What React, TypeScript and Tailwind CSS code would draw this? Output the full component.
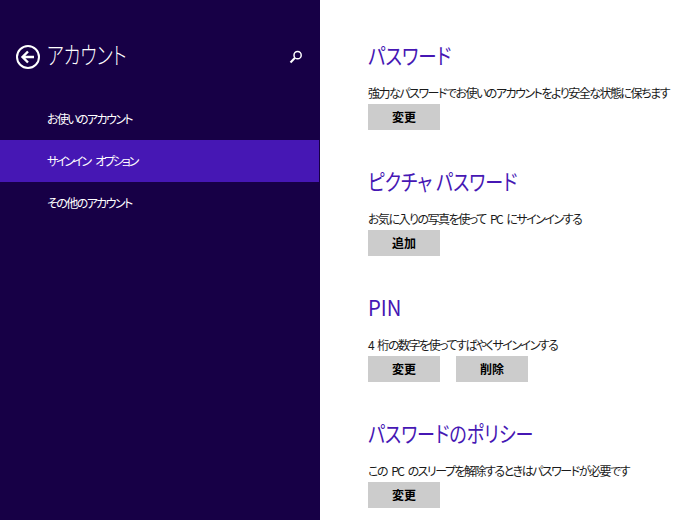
import React from "react";

const font = "font-['Noto_Sans_CJK_JP','Noto_Sans',sans-serif] [font-feature-settings:'palt']";

function SettingButton({ label }: { label: string }) {
  return (
    <button className="w-[72px] h-[26px] bg-[#cccccc] text-[12px] leading-[26px] font-bold text-black text-center">
      {label}
    </button>
  );
}

function Section({
  title,
  desc,
  buttons,
  titleClass = "scale-x-[0.84]",
}: {
  title: string;
  desc: string;
  buttons: string[];
  titleClass?: string;
}) {
  return (
    <section className="h-[126px]">
      <h2
        className={`h-[30px] origin-left text-[22px] leading-[30px] font-normal text-[#4617b4] whitespace-nowrap ${titleClass}`}
      >
        {title}
      </h2>
      <p className="mt-[15px] h-[18px] text-[12px] leading-[18px] tracking-[-1.5px] text-[#1a1a1a] whitespace-nowrap [word-spacing:3px]">
        {desc}
      </p>
      <div className="mt-[2px] flex gap-4">
        {buttons.map((b) => (
          <SettingButton key={b} label={b} />
        ))}
      </div>
    </section>
  );
}

export default function App() {
  return (
    <div className={`flex w-[680px] h-[520px] overflow-hidden bg-white ${font}`}>
      <aside className="w-[320px] shrink-0 bg-[#170046] text-white">
        <div className="flex items-center h-[30px] mt-[39px] pl-4 pr-[17px]">
          <svg width="24" height="24" viewBox="0 0 24 24" fill="none" stroke="#fff" className="shrink-0 mt-[6px]">
            <circle cx="12" cy="12" r="11" strokeWidth="2" />
            <path d="M18 12H7M12 6.5 6.5 12l5.5 5.5" strokeWidth="2.4" />
          </svg>
          <h1 className="ml-[7px] origin-left scale-x-[0.75] text-[24px] leading-[30px] font-light whitespace-nowrap">
            アカウント
          </h1>
          <svg width="14" height="14" viewBox="0 0 14 14" fill="none" stroke="#fff" className="ml-auto mt-[6px]">
            <circle cx="8.6" cy="5.2" r="3.6" strokeWidth="1.5" />
            <path d="M5.8 8 1.5 12.5" strokeWidth="2" />
          </svg>
        </div>
        <nav className="mt-[29px] mr-px text-[12px]">
          <div className="h-[42px] pl-[47px] leading-[42px] tracking-[-1.6px]">お使いのアカウント</div>
          <div className="h-[42px] pl-[47px] leading-[42px] tracking-[-2.2px] [word-spacing:5px] bg-[#4617b4]">
            サインイン オプション
          </div>
          <div className="h-[42px] pl-[47px] leading-[42px] tracking-[-1.6px]">その他のアカウント</div>
        </nav>
      </aside>
      <main className="flex-1 pl-[48px] pt-[39px]">
        <Section
          title="パスワード"
          desc="強力なパスワードでお使いのアカウントをより安全な状態に保ちます"
          buttons={["変更"]}
        />
        <Section
          title="ピクチャ パスワード"
          desc="お気に入りの写真を使って PC にサインインする"
          buttons={["追加"]}
          titleClass="scale-x-[0.82]"
        />
        <Section
          title="PIN"
          desc="4 桁の数字を使ってすばやくサインインする"
          buttons={["変更", "削除"]}
          titleClass="scale-x-[0.92]"
        />
        <Section
          title="パスワードのポリシー"
          desc="この PC のスリープを解除するときはパスワードが必要です"
          buttons={["変更"]}
          titleClass="scale-x-[0.82]"
        />
      </main>
    </div>
  );
}
